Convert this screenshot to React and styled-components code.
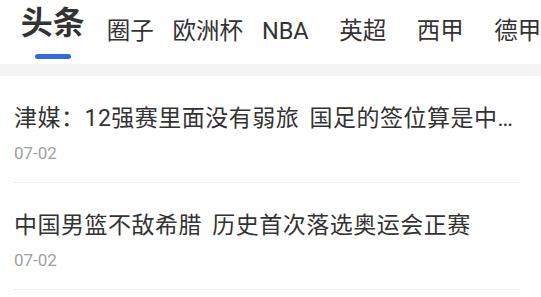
import React from "react";
import styled, { createGlobalStyle } from "styled-components";

const Global = createGlobalStyle`
  body {
    margin: 0;
    background: #fff;
    font-family: Roboto, "Noto Sans CJK SC", sans-serif;
    color: #333;
  }
`;

const Page = styled.div`
  width: 541px;
  height: 297px;
  overflow: hidden;
  background: #fff;
`;

const TabBar = styled.div`
  display: flex;
  align-items: flex-start;
  height: 64px;
  padding-left: 14px;
  white-space: nowrap;
  overflow: hidden;
`;

const Tab = styled.div`
  flex: 0 0 77.5px;
  display: flex;
  flex-direction: column;
  align-items: center;
  margin-top: ${(p) => (p.$active ? "7px" : "20px")};
  font-size: ${(p) => (p.$active ? "32px" : "23.5px")};
  font-weight: ${(p) => (p.$active ? 700 : 400)};
  line-height: 1;
  color: #333;
`;

const Indicator = styled.div`
  width: 36px;
  height: 5px;
  margin-top: 15px;
  border-radius: 3px;
  background: #2f6ae3;
`;

const Band = styled.div`
  height: 12px;
  background: #f4f4f4;
`;

const List = styled.div`
  padding: 0 20px 0 13px;
`;

const Item = styled.div`
  padding: 28px 0 19px;
  border-bottom: 1px solid #eeeeee;
`;

const Title = styled.div`
  font-size: 23px;
  letter-spacing: 0.5px;
  word-spacing: 4px;
  line-height: 30px;
  color: #333;
  padding-left: 1px;
  white-space: nowrap;
  overflow: hidden;
  text-overflow: ellipsis;
`;

const Date = styled.div`
  margin-top: 9px;
  padding-left: 1px;
  font-size: 17px;
  line-height: 20px;
  color: #a0a0a0;
`;

const tabs = ["头条", "圈子", "欧洲杯", "NBA", "英超", "西甲", "德甲"];

const news = [
  { title: "津媒：12强赛里面没有弱旅 国足的签位算是中等偏上", date: "07-02" },
  { title: "中国男篮不敌希腊 历史首次落选奥运会正赛", date: "07-02" },
];

export default function App() {
  return (
    <Page>
      <Global />
      <TabBar>
        {tabs.map((t, i) => (
          <Tab key={t} $active={i === 0}>
            {t}
            {i === 0 && <Indicator />}
          </Tab>
        ))}
      </TabBar>
      <Band />
      <List>
        {news.map((n) => (
          <Item key={n.title}>
            <Title>{n.title}</Title>
            <Date>{n.date}</Date>
          </Item>
        ))}
      </List>
    </Page>
  );
}
